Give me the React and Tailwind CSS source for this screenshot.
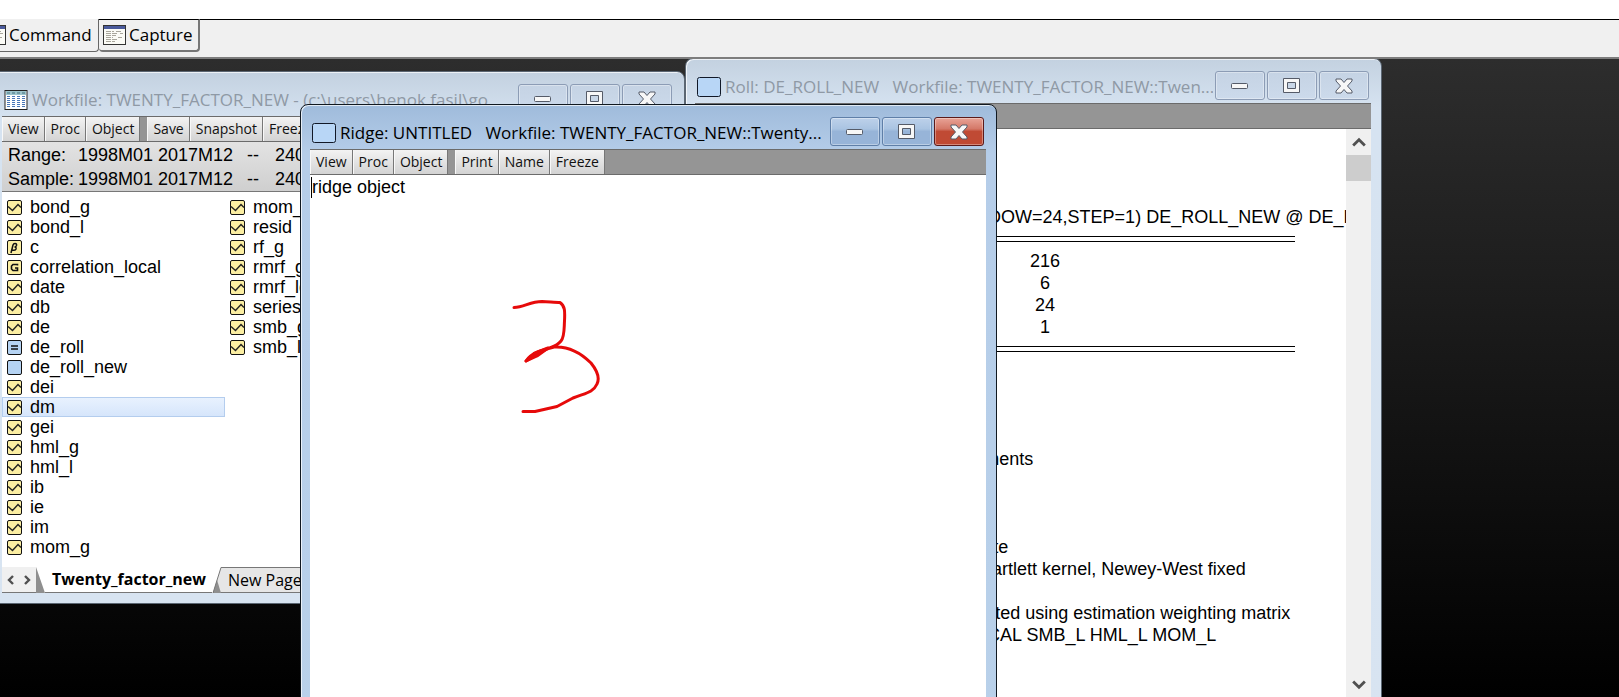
import React from "react";

const ui = "font-['Open_Sans',sans-serif]";
const body = "font-['Liberation_Sans',Arial,sans-serif]";

function PageIcon() {
  return (
    <svg width="23" height="20" viewBox="0 0 23 20" className="shrink-0" aria-hidden="true">
      <rect x="0.5" y="0.5" width="22" height="19" fill="#fbfbf6" stroke="#333" />
      <rect x="1" y="1" width="21" height="3" fill="#4a5a9c" />
      <path d="M3 6.500h8M3 8.500h12M3 10.500h10M3 12.500h7M3 14.500h12M3 16.500h9M13 6.500h6M17 8.500h3M15 12.500h4" stroke="#a9a69c" strokeDasharray="5 1" />
    </svg>
  );
}

function ObjectIcon() {
  return (
    <svg width="24" height="20" viewBox="0 0 24 20" className="shrink-0" aria-hidden="true">
      <rect x="0.5" y="0.5" width="23" height="19" rx="2" fill="#b8d6f6" stroke="#111827" />
    </svg>
  );
}

function WorkfileIcon() {
  return (
    <svg width="24" height="20" viewBox="0 0 24 20" className="shrink-0" aria-hidden="true">
      <rect x="1" y="0.5" width="22" height="19" fill="#fff" stroke="#222" />
      <rect x="2" y="1" width="20" height="4" fill="#9cc4cc" />
      <path d="M3 3h18" stroke="#43707c" strokeDasharray="3 2" />
      <path d="M3 6.500h18M3 8.500h18M3 10.500h18M3 12.500h18M3 14.500h18M3 16.500h18" stroke="#4a78b8" strokeDasharray="3 2" />
    </svg>
  );
}

function Glyph({ kind }) {
  if (kind === "min")
    return (
      <svg width="18" height="8" viewBox="0 0 18 8" aria-hidden="true">
        <rect x="0.5" y="1.5" width="16" height="5" rx="1" fill="#f7f7f7" stroke="#555b68" />
      </svg>
    );
  if (kind === "max")
    return (
      <svg width="18" height="15" viewBox="0 0 18 15" aria-hidden="true">
        <path d="M0.500 0.500h16v14h-16z M4.500 4.500v6h8v-6z" fill="#f7f7f7" fillRule="evenodd" stroke="#555b68" />
      </svg>
    );
  return (
    <svg width="18" height="16" viewBox="0 0 18 16" aria-hidden="true">
      <path d="M1 1h5l3 3.500L12 1h5v2l-4.500 5 4.500 5v2h-5l-3-3.500L6 15H1v-2l4.500-5L1 3z" fill="#f7f7f7" stroke="#555b68" strokeLinejoin="round" />
    </svg>
  );
}

function CaptionButton({ kind, active }) {
  const skin = !active
    ? "border-[#8c9cb5] bg-linear-to-b from-[#c5d3e4] to-[#ccdaeb]"
    : kind === "close"
      ? "border-[#5c1a1a] bg-linear-to-b from-[#e8a397] from-0% via-[#d47868] via-40% to-[#c04a34] to-50%"
      : "border-[#5f7fa8] bg-linear-to-b from-[#bdd1ea] from-0% via-[#aac4e2] via-40% to-[#97b4d8] to-50%";
  const label = { min: "Minimize", max: "Maximize", close: "Close" }[kind];
  return (
    <button aria-label={label} className={`flex h-[29px] w-[50px] items-center justify-center rounded-[3px] border shadow-[inset_0_0_0_1px_rgba(255,255,255,0.35)] ${skin}`}>
      <Glyph kind={kind} />
    </button>
  );
}

function Window({ className, active, icon, title, tools, children }) {
  const frame = active
    ? "border-[#101820] bg-linear-to-b from-[#9fbbdb] from-0% via-[#b5cde9] via-[48px] to-[#b9d1ea] to-100%"
    : "border-[#5b6672] bg-linear-to-b from-[#c3d1e0] from-0% via-[#d6e3f1] via-[48px] to-[#d8e4f1] to-100%";
  return (
    <section className={`absolute flex flex-col rounded-t-lg border pr-[10px] pl-[9px] shadow-[inset_1px_1px_0_rgba(255,255,255,0.7)] ${frame} ${className}`}>
      <header className={`flex h-[44px] shrink-0 items-start gap-0.5 pt-[12px] pr-[2px] pl-[2px] ${active ? "text-black" : "text-[#8f99a5]"}`}>
        <div className="flex min-w-0 flex-1 items-center gap-1 pt-[4px]">
          {icon}
          <h2 className={`min-w-0 flex-1 overflow-hidden text-[17px] leading-[24px] whitespace-pre ${ui}`}>{title}</h2>
        </div>
        <CaptionButton kind="min" active={active} />
        <CaptionButton kind="max" active={active} />
        <CaptionButton kind="close" active={active} />
      </header>
      <div className="flex h-[26px] shrink-0 gap-[7px] border-y border-[#6b6b6b] bg-[#959595]">
        {tools.map((group, i) => (
          <div key={i} className="flex">
            {group.map((t) => (
              <button key={t} className={`border-r border-l border-r-[#777] border-l-[#f8f8f8] bg-linear-to-b from-[#f3f3f3] to-[#d3d3d3] px-[5px] text-[14px] leading-[24px] text-[#111] ${ui}`}>
                {t}
              </button>
            ))}
          </div>
        ))}
      </div>
      {children}
    </section>
  );
}

function ItemIcon({ kind }) {
  const blue = kind === "eq" || kind === "blank";
  return (
    <svg width="15" height="15" viewBox="0 0 15 15" className="shrink-0" aria-hidden="true">
      <rect x="0.5" y="0.5" width="14" height="14" rx="1.500" fill={blue ? "#b5d3f3" : "#fbeea2"} stroke="#111" />
      {kind === "series" && <path d="M1 6.500L5.500 10.500L11 4.500L14 7.500" fill="none" stroke="#222" strokeWidth="1.400" />}
      {kind === "eq" && <path d="M4 6h7M4 9h7" stroke="#111" strokeWidth="1.600" />}
      {kind === "group" && <path d="M10.500 5.500V4.500H6L4.500 6v3L6 10.500h4.500V8H8" fill="none" stroke="#111" strokeWidth="1.600" />}
      {kind === "coef" && <path d="M4 13L6 5Q6.500 3.500 8 3.500Q10 3.500 9.500 5.500Q9 7 7.500 7Q9.500 7 9 9Q8.500 10.800 5.500 10" fill="none" stroke="#111" strokeWidth="1.500" />}
    </svg>
  );
}

const left = [
  ["bond_g"], ["bond_l"], ["c", "coef"], ["correlation_local", "group"], ["date"], ["db"], ["de"],
  ["de_roll", "eq"], ["de_roll_new", "blank"], ["dei"], ["dm"], ["gei"], ["hml_g"], ["hml_l"],
  ["ib"], ["ie"], ["im"], ["mom_g"],
];
const right = [["mom_l"], ["resid"], ["rf_g"], ["rmrf_g"], ["rmrf_local"], ["series01"], ["smb_g"], ["smb_l"]];

function ItemList({ items, selected }) {
  return (
    <ul className="w-[223px] shrink-0">
      {items.map(([name, kind = "series"]) => (
        <li
          key={name}
          className={`flex h-[20px] items-center gap-2 pl-[5px] ${name === selected ? "bg-linear-to-b from-[#e9f2fe] to-[#d5e5fb] outline -outline-offset-1 outline-[#b4cdee]" : ""}`}
        >
          <ItemIcon kind={kind} />
          <span>{name}</span>
        </li>
      ))}
    </ul>
  );
}

function Chevron({ d, size = 12 }) {
  return (
    <svg width={size} height={size} viewBox="0 0 12 12" fill="none" stroke="#505050" strokeWidth="2.400" aria-hidden="true">
      <path d={d} />
    </svg>
  );
}

function WorkfileWindow() {
  return (
    <Window
      className="top-[12px] -left-[8px] h-[533px] w-[693px]"
      icon={<WorkfileIcon />}
      title={"Workfile: TWENTY_FACTOR_NEW - (c:\\users\\henok fasil\\go"}
      tools={[["View", "Proc", "Object"], ["Save", "Snapshot", "Freeze", "Details+/-"]]}
    >
      <div className={`h-[50px] shrink-0 border-b border-[#777] bg-linear-to-b from-[#e3e3e3] to-[#cfcfcf] pt-[1px] pl-[6px] text-[18px] leading-[24px] text-black ${body}`}>
        <dl className="grid grid-cols-[70px_169px_28px_1fr]">
          <dt>Range:</dt><dd>1998M01 2017M12</dd><dd>--</dd><dd>240 obs</dd>
          <dt>Sample:</dt><dd>1998M01 2017M12</dd><dd>--</dd><dd>240 obs</dd>
        </dl>
      </div>
      <div className={`flex min-h-0 flex-1 bg-white pt-[5px] text-[18px] leading-[20px] text-black ${body}`}>
        <ItemList items={left} selected="dm" />
        <ItemList items={right} />
      </div>
      <nav className={`mb-[10px] flex h-[26px] shrink-0 border-b border-[#777] bg-[#e6e6e6] text-[16px] leading-[25px] text-black ${ui}`}>
        <div className="flex w-[34px] items-center justify-between bg-[#f0f0f0] px-[3px]">
          <button aria-label="Previous page"><Chevron d="M8 2L4 6L8 10" /></button>
          <button aria-label="Next page"><Chevron d="M4 2L8 6L4 10" /></button>
        </div>
        <svg width="9" height="26" viewBox="0 0 9 26" aria-hidden="true">
          <path d="M0 0H9V26H0z" fill="#fff" />
          <path d="M0 0L9 26H0z" fill="#8f8f8f" />
        </svg>
        <button className="bg-white pr-1.5 pl-[7px] font-bold">Twenty_factor_new</button>
        <svg width="10" height="26" viewBox="0 0 10 26" aria-hidden="true">
          <path d="M0 0H9L1 26H0z" fill="#fff" />
          <path d="M1 26L5 13L9 26z" fill="#8f8f8f" />
          <path d="M1 26L9 0.500H10" fill="none" stroke="#777" />
        </svg>
        <button className="border-t border-[#777] px-1.5">New Page</button>
      </nav>
    </Window>
  );
}

function ReportRow({ children }) {
  return <p className="h-[22px] whitespace-pre">{children}</p>;
}

function RollWindow() {
  const settings = [
    ["Number of rolling samples", "216"],
    ["Number of coefficients", "6"],
    ["Window size", "24"],
    ["Step size", "1"],
  ];
  return (
    <Window
      className="-top-px left-[685px] h-[681px] w-[697px]"
      icon={<ObjectIcon />}
      title={"Roll: DE_ROLL_NEW   Workfile: TWENTY_FACTOR_NEW::Twen..."}
      tools={[["View", "Proc", "Object"], ["Print", "Name", "Freeze"]]}
    >
      <div className="flex min-h-0 flex-1 bg-white">
        <div className={`min-w-0 flex-1 overflow-hidden pt-[11px] pl-[7px] text-[18px] leading-[22px] text-black ${body}`}>
          <ReportRow>Roll: DE_ROLL_NEW</ReportRow>
          <ReportRow>Method: Rolling regression</ReportRow>
          <ReportRow> </ReportRow>
          <ReportRow>{"Estimation command:     ROLL(WINDOW=24,STEP=1) DE_ROLL_NEW @ DE_ROLL"}</ReportRow>
          <div className="my-[8px] w-[593px] border-y border-black py-[4px]">
            <div className="border-y border-black py-[8px]">
              <table className="w-full border-collapse">
                <tbody>
                  {settings.map(([label, value]) => (
                    <tr key={label}>
                      <td className="w-[300px] p-0">{label}</td>
                      <td className="p-0 pr-[207px] text-center">{value}</td>
                    </tr>
                  ))}
                </tbody>
              </table>
            </div>
          </div>
          <div className="pt-[88px]">
            <ReportRow>Method: Generalized Method of Moments</ReportRow>
            <ReportRow> </ReportRow>
            <ReportRow> </ReportRow>
            <ReportRow> </ReportRow>
            <ReportRow>Linear estimation with 1 weight update</ReportRow>
            <ReportRow>Estimation weighting matrix: HAC (Bartlett kernel, Newey-West fixed</ReportRow>
            <ReportRow> </ReportRow>
            <ReportRow>Standard errors & covariance computed using estimation weighting matrix</ReportRow>
            <ReportRow>Instrument specification: RMRF_LOCAL SMB_L HML_L MOM_L</ReportRow>
          </div>
        </div>
        <div className="mb-[39px] flex w-[25px] shrink-0 flex-col items-center bg-[#f0f0f0] pb-[7px]">
          <button aria-label="Scroll up" className="flex h-[26px] w-full shrink-0 items-center justify-center"><Chevron d="M1 9L6 4L11 9" size={14} /></button>
          <div className="h-[26px] w-full bg-[#cdcdcd]" />
          <button aria-label="Scroll down" className="mt-auto"><Chevron d="M1 3L6 8L11 3" size={14} /></button>
        </div>
      </div>
    </Window>
  );
}

function RidgeWindow() {
  return (
    <Window
      active
      className="top-[45px] left-[300px] h-[640px] w-[697px]"
      icon={<ObjectIcon />}
      title={"Ridge: UNTITLED   Workfile: TWENTY_FACTOR_NEW::Twenty..."}
      tools={[["View", "Proc", "Object"], ["Print", "Name", "Freeze"]]}
    >
      <div className={`flex min-h-0 flex-1 flex-col bg-white text-[18px] leading-[24px] text-black ${body}`}>
        <p className="ml-px flex h-[24px] items-center">
          <span className="h-[21px] w-px bg-black" />
          ridge object
        </p>
        <svg width="90" height="118" viewBox="510 298 90 118" fill="none" stroke="#e60a0a" strokeWidth="3" strokeLinecap="round" strokeLinejoin="round" className="mt-[99px] ml-[200px]" aria-label="3">
          <path d="M514 307.500C524 307.500 530 301.500 542 301.500C551 302 556 302.500 560 302.500C565 306 565 311 564.500 321C564 330 564.500 337 561 341C556 347 552 346.500 545 350L526 361C532 352 544 349.500 554 347C569 346 581 353 591 363C599 373 599 380 597 384C593 393 585 393 573 398L557 406.500L535 411.500H523" />
          <path d="M526 361L534 353.500L548 348L537 356z" fill="#e60a0a" />
        </svg>
      </div>
    </Window>
  );
}

export default function App() {
  return (
    <main className="flex h-screen min-h-[600px] flex-col overflow-hidden bg-white">
      <div className="h-[19px] shrink-0" />
      <div className={`flex h-[40px] shrink-0 items-start border-b-2 border-[#7d7d7d] bg-[#f0f0f0] text-[17px] leading-[30px] text-black ${ui}`}>
        <button className="-ml-[18px] flex h-[33px] w-[117px] items-center gap-[3px] rounded-b border-r border-b border-[#666] pl-px">
          <PageIcon />
          Command
        </button>
        <button className="flex h-[33px] w-[101px] items-center gap-[3px] rounded-b border-t border-r-2 border-b-2 border-t-black border-r-[#777] border-b-[#777] pl-1">
          <PageIcon />
          Capture
        </button>
        <div className="flex-1 border-t border-black" />
      </div>
      <div className="relative min-h-0 flex-1 overflow-hidden bg-linear-to-b/srgb from-[#2d2d2d] to-black">
        <WorkfileWindow />
        <RollWindow />
        <RidgeWindow />
      </div>
    </main>
  );
}
